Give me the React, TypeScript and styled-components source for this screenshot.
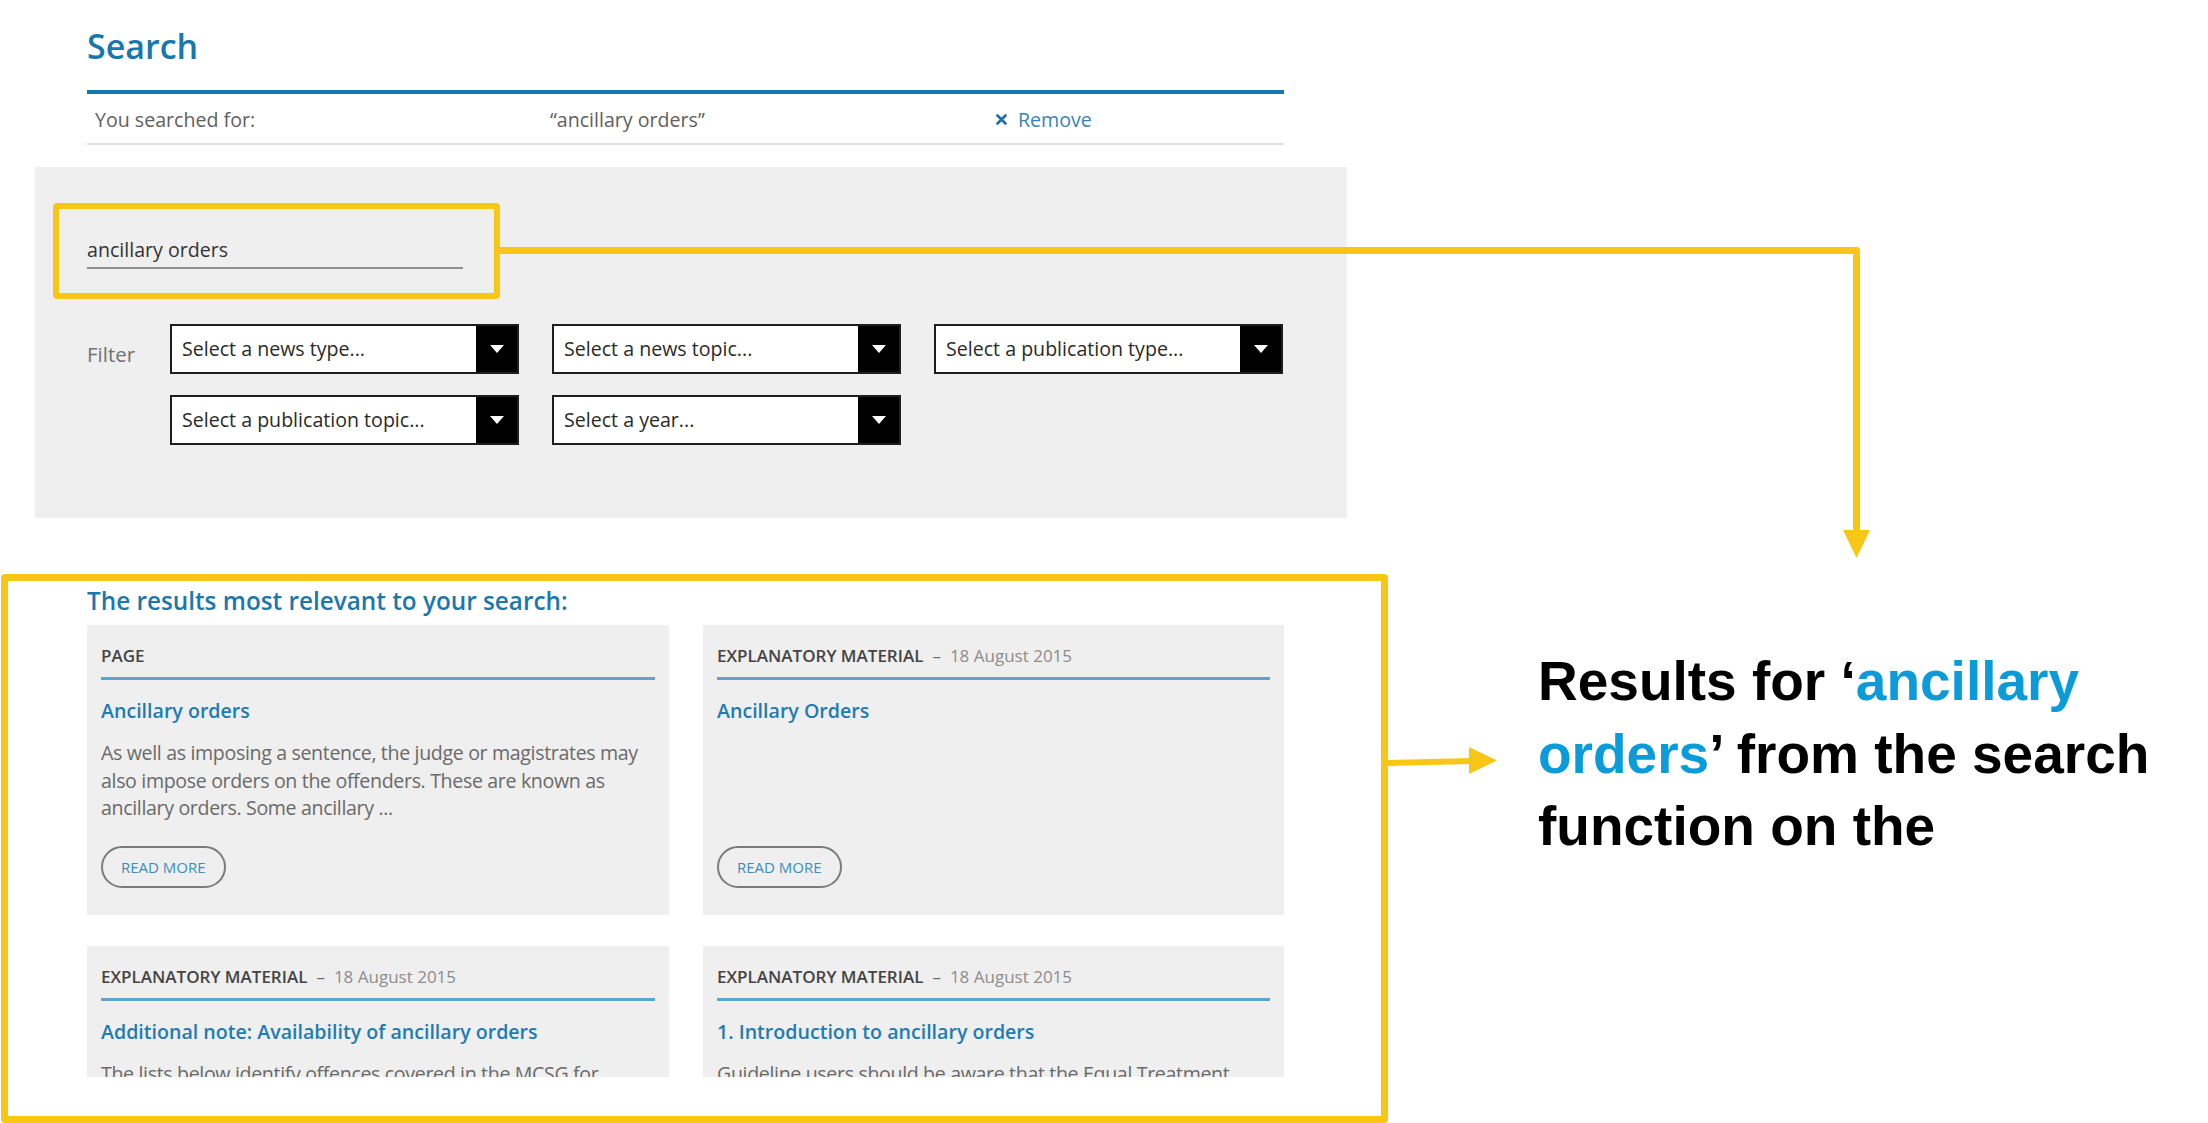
import React from 'react';
import styled, { createGlobalStyle } from 'styled-components';

const YELLOW = '#f8c617';

const GlobalStyle = createGlobalStyle`
  html, body {
    margin: 0;
    padding: 0;
    background: #fff;
  }
  body {
    font-family: "Open Sans", "Liberation Sans", sans-serif;
  }
`;

interface Result {
  type: string;
  date?: string;
  title: string;
  body?: string;
}

const results: Result[] = [
  {
    type: 'PAGE',
    title: 'Ancillary orders',
    body: 'As well as imposing a sentence, the judge or magistrates may also impose orders on the offenders. These are known as ancillary orders. Some ancillary ...',
  },
  {
    type: 'EXPLANATORY MATERIAL',
    date: '18 August 2015',
    title: 'Ancillary Orders',
  },
  {
    type: 'EXPLANATORY MATERIAL',
    date: '18 August 2015',
    title: 'Additional note: Availability of ancillary orders',
    body: 'The lists below identify offences covered in the MCSG for offenders for which ancillary orders may be available.',
  },
  {
    type: 'EXPLANATORY MATERIAL',
    date: '18 August 2015',
    title: '1. Introduction to ancillary orders',
    body: 'Guideline users should be aware that the Equal Treatment Bench Book covers important aspects.',
  },
];

const filters = [
  'Select a news type...',
  'Select a news topic...',
  'Select a publication type...',
  'Select a publication topic...',
  'Select a year...',
];

const App = () => {
  return (
    <Page>
      <GlobalStyle />
      <LeftColumn>
        <Header>
          <Title>Search</Title>
          <SearchedRow>
            <span>You searched for:</span>
            <span>“ancillary orders”</span>
            <RemoveLink>
              <svg width="11" height="11" viewBox="0 0 11 11">
                <path d="M1.5 1.5 L9.5 9.5 M9.5 1.5 L1.5 9.5" stroke="#1f6fa3" strokeWidth="2.6" strokeLinecap="round" />
              </svg>
              Remove
            </RemoveLink>
          </SearchedRow>
        </Header>

        <FilterPanel>
          <Highlight>
            <SearchField>ancillary orders</SearchField>
          </Highlight>
          <FilterRow>
            <FilterLabel>Filter</FilterLabel>
            <SelectGrid>
              {filters.map((f) => (
                <Select key={f}>
                  <SelectText>{f}</SelectText>
                  <SelectArrow>
                    <Caret />
                  </SelectArrow>
                </Select>
              ))}
            </SelectGrid>
          </FilterRow>
        </FilterPanel>

        <ResultsBox>
          <ResultsClip>
            <ResultsHeading>The results most relevant to your search:</ResultsHeading>
            <CardGrid>
              {results.map((r, i) => (
                <Card key={i}>
                  <Meta>
                    <MetaType>{r.type}</MetaType>
                    {r.date ? (
                      <>
                        <Dash>–</Dash>
                        <MetaDate>{r.date}</MetaDate>
                      </>
                    ) : null}
                  </Meta>
                  <CardTitle>{r.title}</CardTitle>
                  {r.body ? <CardBody>{r.body}</CardBody> : null}
                  <ReadMore>READ MORE</ReadMore>
                </Card>
              ))}
            </CardGrid>
          </ResultsClip>
        </ResultsBox>
      </LeftColumn>

      <Aside>
        Results for ‘<Accent>ancillary</Accent>
        <br />
        <Accent>orders</Accent>’ from the search
        <br />
        function on the
      </Aside>

      <Connectors width="2208" height="1123" viewBox="0 0 2208 1123">
        <polyline
          points="500,250.5 1856.5,250.5 1856.5,532"
          fill="none"
          stroke={YELLOW}
          strokeWidth="7"
          strokeLinejoin="round"
        />
        <polygon points="1843,530 1870,530 1856.5,558" fill={YELLOW} />
        <line x1="1388" y1="763" x2="1472" y2="761" stroke={YELLOW} strokeWidth="6" />
        <polygon points="1469,747 1497,760.5 1469,774" fill={YELLOW} />
      </Connectors>
    </Page>
  );
};

const Page = styled.div`
  position: relative;
  width: 2208px;
  height: 1123px;
  overflow: hidden;
  display: flex;
  background: #fff;
`;

const LeftColumn = styled.div`
  width: 1388px;
  flex: none;
`;

const Header = styled.div`
  margin-left: 87px;
  width: 1197px;
`;

const Title = styled.h1`
  margin: 26px 0 24px;
  font-size: 34px;
  line-height: 40px;
  font-weight: 600;
  color: #1877ad;
`;

const SearchedRow = styled.div`
  display: grid;
  grid-template-columns: 455px 446px 1fr;
  padding: 12px 0 10px 8px;
  border-top: 4px solid #1577b0;
  border-bottom: 2px solid #dedede;
  font-size: 19.6px;
  line-height: 27px;
  color: #606060;
`;

const RemoveLink = styled.span`
  display: flex;
  align-items: center;
  gap: 11px;
  color: #3785b8;
`;

const FilterPanel = styled.div`
  margin: 22px 0 0 35px;
  width: 1312px;
  box-sizing: border-box;
  padding: 36px 0 73px 52px;
  background: #efefef;
`;

const Highlight = styled.div`
  margin-left: -34px;
  width: 447px;
  box-sizing: border-box;
  padding: 27px 31px 24px 28px;
  border: 6px solid ${YELLOW};
  border-radius: 4px;
`;

const SearchField = styled.div`
  padding-bottom: 4px;
  border-bottom: 2px solid #8e8e8e;
  font-size: 19.6px;
  line-height: 27px;
  color: #333;
`;

const FilterRow = styled.div`
  display: flex;
  margin-top: 25px;
`;

const FilterLabel = styled.div`
  width: 83px;
  padding-top: 5px;
  font-size: 20.5px;
  line-height: 50px;
  color: #727272;
`;

const SelectGrid = styled.div`
  display: grid;
  grid-template-columns: repeat(3, 349px);
  column-gap: 33px;
  row-gap: 21px;
`;

const Select = styled.div`
  display: flex;
  height: 50px;
  box-sizing: border-box;
  border: 2px solid #1e1e1e;
  background: #fff;
`;

const SelectText = styled.div`
  flex: 1;
  padding-left: 10px;
  font-size: 19.6px;
  line-height: 46px;
  color: #2a2a2a;
`;

const SelectArrow = styled.div`
  width: 41px;
  display: flex;
  align-items: center;
  justify-content: center;
  background: #000;
`;

const Caret = styled.span`
  width: 0;
  height: 0;
  border-left: 7px solid transparent;
  border-right: 7px solid transparent;
  border-top: 8px solid #fff;
`;

const ResultsBox = styled.div`
  margin: 56px 0 0 1px;
  width: 1387px;
  height: 549px;
  box-sizing: border-box;
  padding-left: 79px;
  border: 7px solid ${YELLOW};
  border-radius: 4px;
`;

const ResultsClip = styled.div`
  height: 496px;
  overflow: hidden;
  padding-top: 4px;
  box-sizing: border-box;
`;

const ResultsHeading = styled.h2`
  margin: 0 0 8px;
  font-size: 24.3px;
  line-height: 32px;
  font-weight: 600;
  color: #1a78ad;
`;

const CardGrid = styled.div`
  display: grid;
  grid-template-columns: 582px 581px;
  column-gap: 34px;
  row-gap: 31px;
`;

const Card = styled.div`
  display: flex;
  flex-direction: column;
  height: 290px;
  box-sizing: border-box;
  padding: 19px 14px 27px;
  background: #efefef;
`;

const Meta = styled.div`
  padding-bottom: 9px;
  border-bottom: 3px solid #5ba6cf;
  font-size: 17px;
  line-height: 24px;
  color: #444;
  white-space: nowrap;
`;

const MetaType = styled.span`
  font-weight: 600;
`;

const Dash = styled.span`
  margin: 0 9px;
  color: #666;
`;

const MetaDate = styled.span`
  color: #8c8c8c;
`;

const CardTitle = styled.div`
  margin-top: 17px;
  font-size: 19.6px;
  line-height: 28px;
  font-weight: 600;
  color: #1d7cb3;
`;

const CardBody = styled.p`
  margin: 14px 0 0;
  font-size: 19.6px;
  line-height: 27.5px;
  letter-spacing: -0.35px;
  color: #6a6a6a;
`;

const ReadMore = styled.button`
  margin-top: auto;
  align-self: flex-start;
  height: 42px;
  box-sizing: border-box;
  padding: 0 18px;
  border: 2px solid #7b7b7b;
  border-radius: 21px;
  background: transparent;
  font-family: inherit;
  font-size: 15px;
  line-height: 38px;
  color: #3c8dbe;
`;

const Aside = styled.div`
  flex: 1;
  padding: 645px 0 0 150px;
  font-family: "Liberation Sans", Arial, sans-serif;
  font-weight: 700;
  font-size: 55px;
  line-height: 72.5px;
  color: #000;
`;

const Accent = styled.span`
  color: #0b9bd9;
`;

const Connectors = styled.svg`
  position: absolute;
  top: 0;
  left: 0;
  pointer-events: none;
`;

export default App;
